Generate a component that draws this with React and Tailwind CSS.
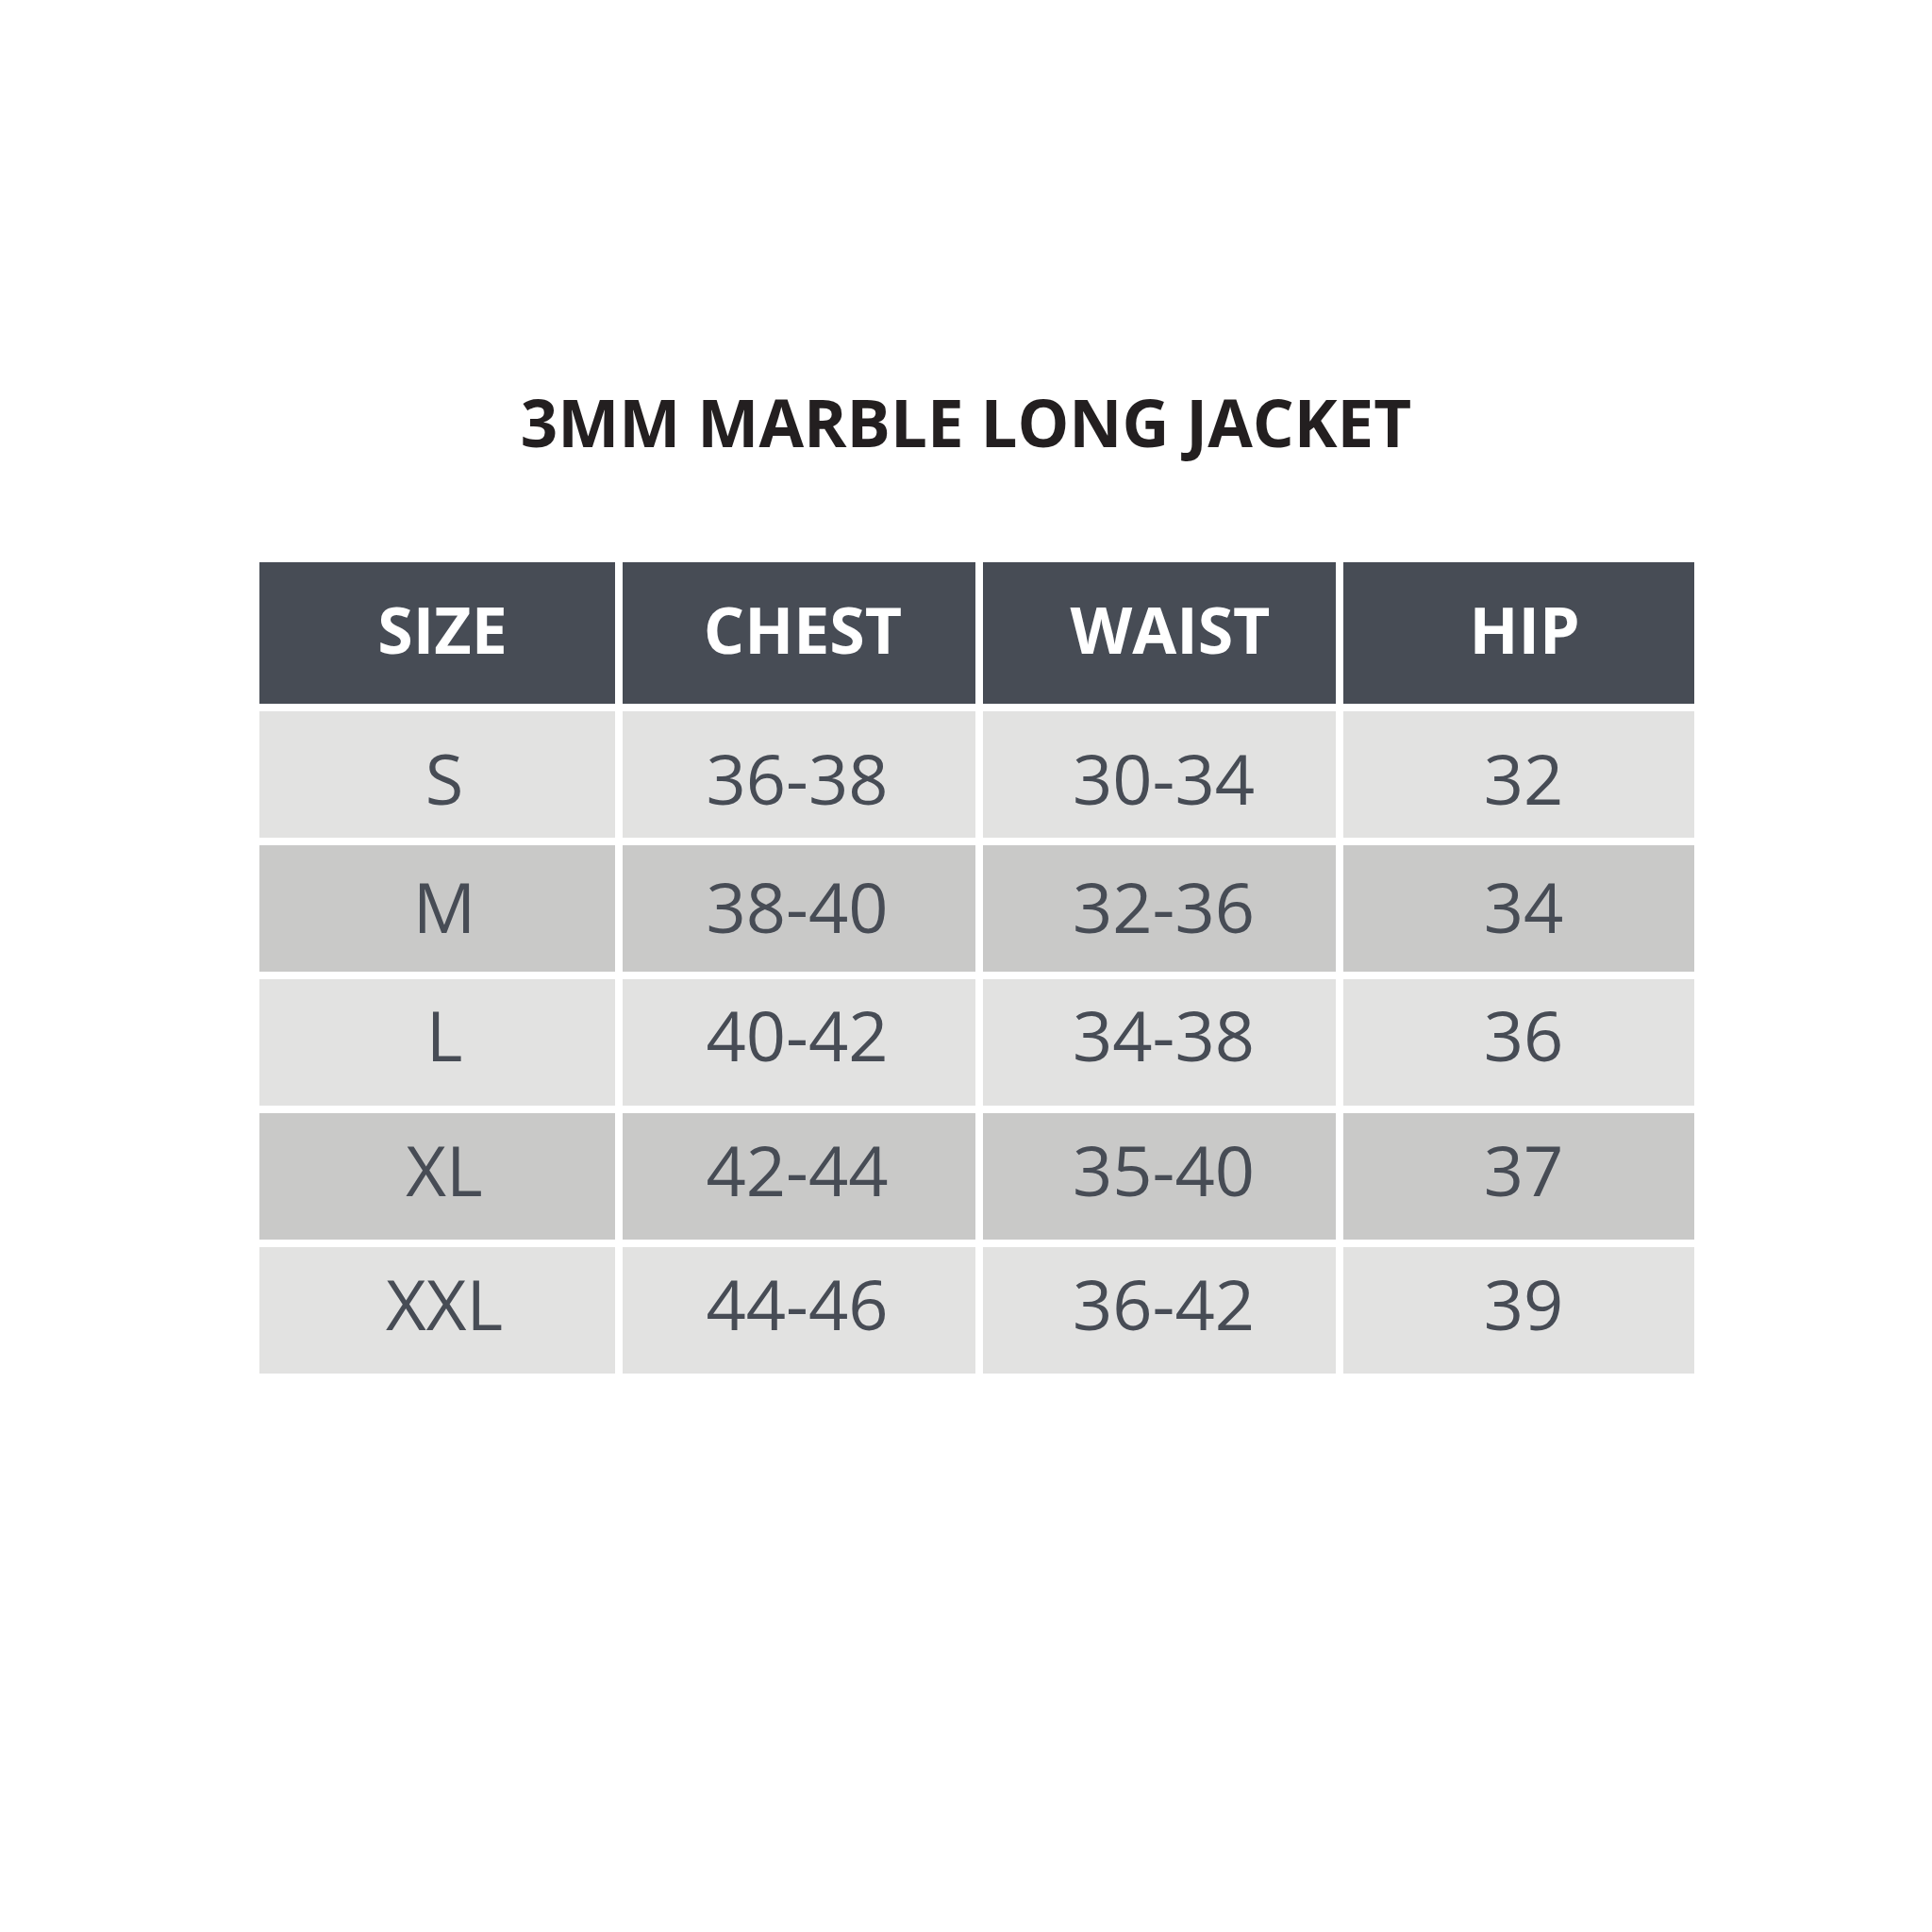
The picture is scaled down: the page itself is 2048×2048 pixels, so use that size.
const headers = [
  { label: 'SIZE', pad: 'pl-[11px]' },
  { label: 'CHEST', pad: 'pl-[8px]' },
  { label: 'WAIST', pad: 'pl-[23px]' },
  { label: 'HIP', pad: 'pl-[12px]' },
]

// per-column / per-row nudges so the text sits where the original layout put it
const cellPad = ['pl-[15px]', 'pr-[4px]', 'pl-[9px]', 'pl-[10px]']
const rowPad = ['pt-[6px]', 'pb-[6px]', 'pb-[18px]', 'pb-[16px]', 'pb-[16px]']

const rows = [
  ['S', '36-38', '30-34', '32'],
  ['M', '38-40', '32-36', '34'],
  ['L', '40-42', '34-38', '36'],
  ['XL', '42-44', '35-40', '37'],
  ['XXL', '44-46', '36-42', '39'],
]

export default function App() {
  return (
    <div className="w-[2048px] h-[2048px] bg-white font-['Open_Sans',sans-serif]">
      <div className="pt-[397px] flex justify-center">
        <h1 className="text-[69px] leading-[100px] font-bold text-[#231f20]">3MM MARBLE LONG JACKET</h1>
      </div>

      <div className="ml-[275px] mt-[99px] w-[1521px] grid grid-cols-[377px_374px_374px_372px] gap-x-2">
        {headers.map(h => (
          <div key={h.label} className={`h-[150px] bg-[#474c55] flex items-center justify-center pb-[8px] text-white text-[68px] font-bold ${h.pad}`}>
            {h.label}
          </div>
        ))}
      </div>

      <div className="ml-[275px] mt-2 w-[1521px] grid grid-cols-[377px_374px_374px_372px] gap-2">
        {rows.map((row, i) => row.map((cell, j) => (
          <div
            key={`${i}-${j}`}
            className={`h-[134px] flex items-center justify-center text-[74px] text-[#474c55] ${cellPad[j]} ${i % 2 === 1 ? 'bg-[#c9c9c8]' : 'bg-[#e2e2e1]'}`}
          >
            <span className={rowPad[i]}>{cell}</span>
          </div>
        )))}
      </div>
    </div>
  )
}
